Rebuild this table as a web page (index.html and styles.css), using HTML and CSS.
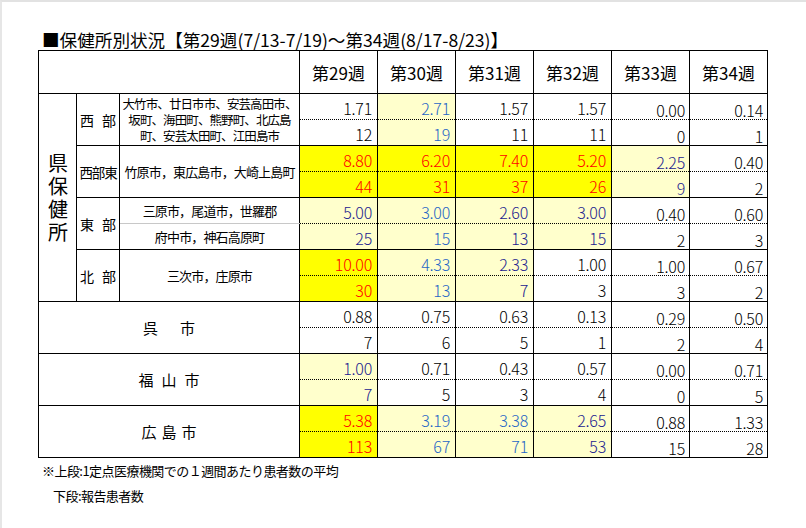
FILE: index.html
```html
<!DOCTYPE html>
<html lang="ja">
<head>
<meta charset="utf-8">
<title>保健所別状況</title>
<link rel="stylesheet" href="styles.css">
</head>
<body>
<div class="page">
  <h1 class="title">■保健所別状況【第29週(7/13-7/19)～第34週(8/17-8/23)】</h1>
  <table class="t">
    <colgroup>
      <col class="ca"><col class="cb"><col class="cc">
      <col class="cn"><col class="cn"><col class="cn"><col class="cn"><col class="cn"><col class="cn">
    </colgroup>
    <tr class="hd">
      <td colspan="3"></td>
      <td>第29週</td><td>第30週</td><td>第31週</td><td>第32週</td><td>第33週</td><td>第34週</td>
    </tr>
    <tr class="top">
      <td rowspan="8" class="ken"><span class="kv">県保健所</span></td>
      <td rowspan="2" class="area"><span class="sp">西</span>部</td>
      <td rowspan="2" class="cities multi">大竹市、廿日市市、安芸高田市、<br>坂町、海田町、熊野町、北広島<br>町、安芸太田町、江田島市</td>
      <td class="n">1.71</td><td class="n ly lb">2.71</td><td class="n">1.57</td><td class="n">1.57</td><td class="n lt">0.00</td><td class="n lt">0.14</td>
    </tr>
    <tr class="bot">
      <td class="n">12</td><td class="n ly lb">19</td><td class="n">11</td><td class="n">11</td><td class="n lt">0</td><td class="n lt">1</td>
    </tr>
    <tr class="top">
      <td rowspan="2" class="area tight">西部東</td>
      <td rowspan="2" class="cities">竹原市，東広島市，大崎上島町</td>
      <td class="n y r">8.80</td><td class="n y r">6.20</td><td class="n y r">7.40</td><td class="n y r">5.20</td><td class="n lt ly db">2.25</td><td class="n lt">0.40</td>
    </tr>
    <tr class="bot">
      <td class="n y r">44</td><td class="n y r">31</td><td class="n y r">37</td><td class="n y r">26</td><td class="n lt ly db">9</td><td class="n lt">2</td>
    </tr>
    <tr class="top">
      <td rowspan="2" class="area"><span class="sp">東</span>部</td>
      <td class="cities sub1">三原市，尾道市，世羅郡</td>
      <td class="n ly db">5.00</td><td class="n ly lb">3.00</td><td class="n ly db">2.60</td><td class="n ly db">3.00</td><td class="n lt">0.40</td><td class="n lt">0.60</td>
    </tr>
    <tr class="bot">
      <td class="cities sub2">府中市，神石高原町</td>
      <td class="n ly db">25</td><td class="n ly lb">15</td><td class="n ly db">13</td><td class="n ly db">15</td><td class="n lt">2</td><td class="n lt">3</td>
    </tr>
    <tr class="top">
      <td rowspan="2" class="area"><span class="sp">北</span>部</td>
      <td rowspan="2" class="cities">三次市，庄原市</td>
      <td class="n y r">10.00</td><td class="n ly lb">4.33</td><td class="n ly db">2.33</td><td class="n">1.00</td><td class="n lt">1.00</td><td class="n lt">0.67</td>
    </tr>
    <tr class="bot">
      <td class="n y r">30</td><td class="n ly lb">13</td><td class="n ly db">7</td><td class="n">3</td><td class="n lt">3</td><td class="n lt">2</td>
    </tr>
    <tr class="top">
      <td rowspan="2" colspan="3" class="city"><span class="kure">呉</span>市</td>
      <td class="n">0.88</td><td class="n">0.75</td><td class="n">0.63</td><td class="n">0.13</td><td class="n lt">0.29</td><td class="n lt">0.50</td>
    </tr>
    <tr class="bot">
      <td class="n">7</td><td class="n">6</td><td class="n">5</td><td class="n">1</td><td class="n lt">2</td><td class="n lt">4</td>
    </tr>
    <tr class="top">
      <td rowspan="2" colspan="3" class="city fuku">福山市</td>
      <td class="n ly db">1.00</td><td class="n">0.71</td><td class="n">0.43</td><td class="n">0.57</td><td class="n lt">0.00</td><td class="n lt">0.71</td>
    </tr>
    <tr class="bot">
      <td class="n ly db">7</td><td class="n">5</td><td class="n">3</td><td class="n">4</td><td class="n lt">0</td><td class="n lt">5</td>
    </tr>
    <tr class="top">
      <td rowspan="2" colspan="3" class="city hiro">広島市</td>
      <td class="n y r">5.38</td><td class="n ly lb">3.19</td><td class="n ly lb">3.38</td><td class="n ly db">2.65</td><td class="n lt">0.88</td><td class="n lt">1.33</td>
    </tr>
    <tr class="bot">
      <td class="n y r">113</td><td class="n ly lb">67</td><td class="n ly lb">71</td><td class="n ly db">53</td><td class="n lt">15</td><td class="n lt">28</td>
    </tr>
  </table>
  <div class="notes">
    <p class="note">※上段:1定点医療機関での１週間あたり患者数の平均</p>
    <p class="note indent">下段:報告患者数</p>
  </div>
</div>
</body>
</html>
```

FILE: styles.css
```css
html, body {
  margin: 0;
  padding: 0;
  background: #ffffff;
}
body {
  border-top: 2px solid #e2e2e2;
  border-left: 2px solid #e6e6e6;
  min-height: 526px;
  font-family: "Noto Sans CJK JP", "Noto Sans", sans-serif;
  color: #000;
}
.page {
  padding: 28px 0 0 36px;
}
.title {
  margin: 0;
  padding-left: 4px;
  font-size: 17.6px;
  font-weight: normal;
  line-height: 20px;
  height: 20px;
  white-space: nowrap;
}
.t {
  border-collapse: collapse;
  table-layout: fixed;
  width: 729px;
}
.ca { width: 38px; }
.cb { width: 43px; }
.cc { width: 180px; }
.cn { width: 78px; }
.t tr { height: 26px; }
.t tr.hd { height: 43px; }
.t td {
  border: 1px solid #000;
  padding: 0;
  white-space: nowrap;
  line-height: 18px;
}
.hd td {
  text-align: center;
  font-size: 17px;
  padding-top: 1px;
}
.n {
  text-align: right;
  vertical-align: bottom;
  font-size: 16px;
  font-weight: 300;
  letter-spacing: -0.2px;
}
.t td.n { padding: 0 5px 2px 0; }
.t td.n.lt { padding: 0 4px 0 0; }
.t tr.top td.n { border-bottom: 1px dotted #000; }
.t tr.bot td.n { border-top: 1px dotted #000; }
.y { background: #ffff00; }
.ly { background: #ffffcc; }
.r { color: #ff0000; }
.lb { color: #1f66c6; }
.db { color: #22228f; }
.ken {
  text-align: center;
  vertical-align: middle;
  font-size: 20px;
}
.kv {
  display: inline-block;
  writing-mode: vertical-rl;
  letter-spacing: 3px;
  line-height: 24px;
  margin-top: 4px;
}
.area {
  text-align: center;
  vertical-align: middle;
  font-size: 14px;
}
.area .sp { margin-right: 8px; }
.area.tight { letter-spacing: -1.2px; font-size: 13.5px; }
.cities {
  text-align: center;
  vertical-align: middle;
  font-size: 13px;
  letter-spacing: -0.85px;
}
.t td.multi {
  font-size: 12.5px;
  line-height: 16px;
  letter-spacing: -0.9px;
}
.t td.sub1 { border-bottom: 1px solid #c8c8c8; }
.t td.sub2 { border-top: 1px solid #c8c8c8; }
.city {
  text-align: center;
  vertical-align: middle;
  font-size: 15px;
}
.kure { margin-right: 22px; }
.t td.fuku { letter-spacing: 8px; padding-left: 8px; }
.t td.hiro { letter-spacing: 5px; padding-left: 5px; }
.notes {
  padding-left: 4px;
}
.note {
  margin: 0;
  font-size: 13px;
  line-height: 25px;
  letter-spacing: -0.55px;
}
.note.indent { padding-left: 11px; }
```
